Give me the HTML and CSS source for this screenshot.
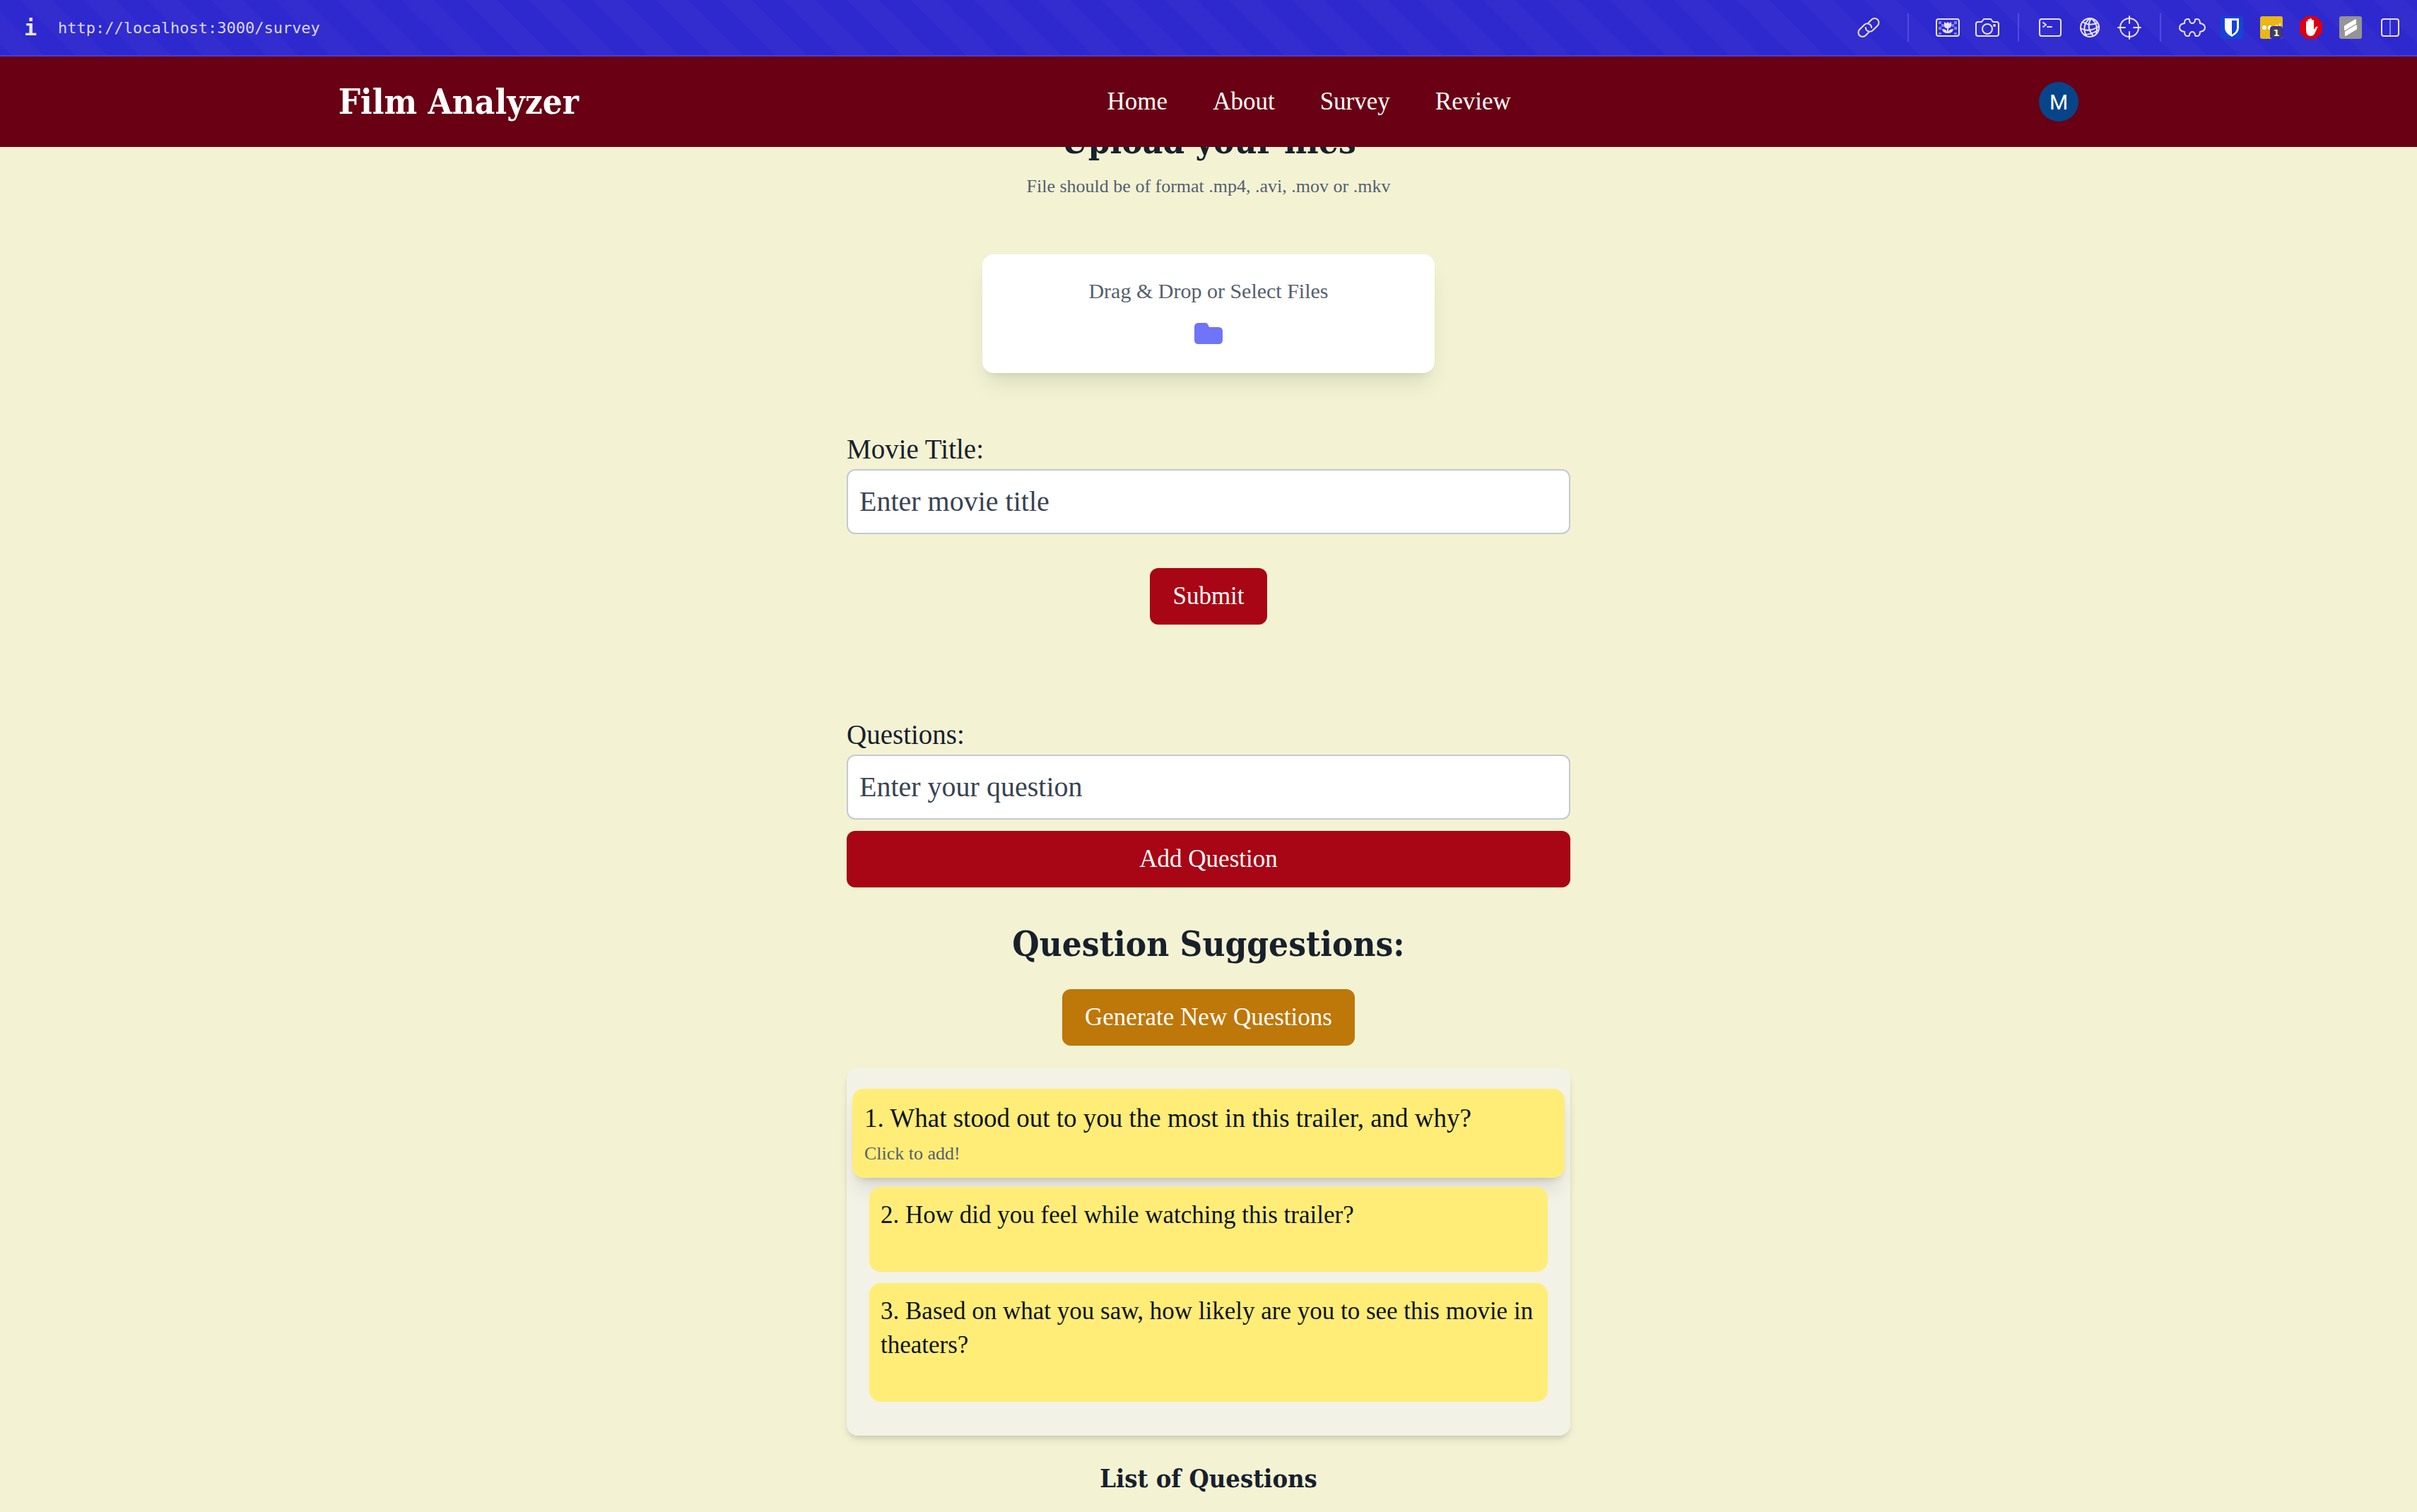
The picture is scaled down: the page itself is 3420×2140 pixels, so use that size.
FILE: index.html
```html
<!DOCTYPE html>
<html lang="en">
<head>
<meta charset="utf-8">
<title>Film Analyzer</title>
<link rel="stylesheet" href="styles.css">
</head>
<body>
<div class="toolbar">
  <span class="info">i</span>
  <span class="url">http://localhost:3000/survey</span>
  <div class="tools">
    <svg class="tool" viewBox="0 0 40 40"><g transform="rotate(-45 20 20)"><path d="M15 25H9a6 6 0 0 1 0-12h10a6 6 0 0 1 4 10"/><path d="M25 15h6a6 6 0 0 1 0 12H21a6 6 0 0 1-4-10"/></g></svg>
    <span class="sep sep-wide"></span>
    <svg class="tool" viewBox="0 0 40 40"><rect x="4" y="8" width="32" height="24" rx="3"/><g class="faint"><rect x="7" y="11" width="4" height="4"/><rect x="11" y="15" width="4" height="4"/><rect x="7" y="19" width="4" height="4"/><rect x="7" y="27" width="4" height="3"/><rect x="29" y="11" width="4" height="4"/><rect x="25" y="15" width="4" height="4"/><rect x="29" y="19" width="4" height="4"/><rect x="29" y="27" width="4" height="3"/></g><path class="solid" d="M15 12l3 2 2-2 2 2 3-2v5q-1 4-4 4v5q1-4 7-4-1 6-8 6t-8-6q6 0 7 4v-5q-4 0-4-4z"/></svg>
    <svg class="tool" viewBox="0 0 40 40"><path d="M7 12h5l3-4h10l3 4h5q3 0 3 3v14q0 3-3 3H7q-3 0-3-3V15q0-3 3-3z"/><circle cx="20" cy="22" r="7"/><circle class="solid" cx="30" cy="17" r="2"/></svg>
    <span class="sep"></span>
    <svg class="tool" viewBox="0 0 40 40"><rect x="5" y="8" width="30" height="24" rx="3"/><path d="M10 13l4 3-4 3M16 19h6"/></svg>
    <svg class="tool" viewBox="0 0 40 40"><circle cx="20" cy="20" r="13"/><path d="M20 7q-12 10-5 25M22 7q-8 12 3 25M22 7q11 9 7 22M10 12q10 7 21 1M7 21q12 7 26-3M12 30q10 0 19-6"/></svg>
    <svg class="tool" viewBox="0 0 40 40"><circle cx="20" cy="20" r="13"/><path d="M20 4v10M20 26v10M4 20h10M26 20h10"/></svg>
    <span class="sep"></span>
    <svg class="tool" viewBox="0 0 40 40"><path d="M9 14q0-6 4-6h2q1 0 1 2 1 4 4 4t4-4q0-2 1-2h2q4 0 4 6 7 1 7 6t-7 6q0 6-4 6h-2q-1 0-1-2-1-4-4-4t-4 4q0 2-1 2h-2q-4 0-4-6-7-1-7-6t7-6z"/></svg>
    <svg class="tool badge" viewBox="0 0 40 40"><rect x="4" y="4" width="32" height="32" rx="4" fill="#1443d6"/><path d="M10 7h20v13q0 8-10 13-10-5-10-13z" fill="#fff"/><path d="M20 10h7v11q0 5-7 9z" fill="#1443d6"/></svg>
    <svg class="tool badge" viewBox="0 0 40 40"><rect x="4" y="4" width="32" height="32" rx="3" fill="#eab714"/><circle cx="10" cy="20" r="3" fill="#fff"/><circle cx="18" cy="20" r="3" fill="#fff"/><path d="M26 16h3v3h-3zM31 14h2v5h-2z" fill="#f8e7b4"/><rect x="19" y="19" width="16" height="16" rx="3" fill="#444" stroke="#2e28cf"/><text class="count" x="27" y="32" text-anchor="middle">1</text></svg>
    <svg class="tool badge" viewBox="0 0 40 40"><path d="M13 4h14l9 9v14l-9 9H13l-9-9V13z" fill="#dc0010"/><path d="M13 24V12q1-2 2.500 0v7V9q1-2 2.500 0v9V8q1.500-2 3 0v10V10q1.500-2 3 0v13l3-4q2-1 2.500 0l-4 9q-2 4-6 4-6 0-6.500-8z" fill="#fff"/></svg>
    <svg class="tool badge" viewBox="0 0 40 40"><rect x="4" y="4" width="32" height="32" rx="3" fill="#949494"/><path d="M12 18l15-9v5l-15 9zM13 26l15-9v5l-15 9z" fill="#fff" stroke="#fff"/></svg>
    <svg class="tool" viewBox="0 0 40 40"><rect x="8" y="8" width="24" height="24" rx="3"/><path class="thin" d="M20 8v24"/></svg>
  </div>
</div>

<header class="site-header">
  <a class="brand" href="#">Film Analyzer</a>
  <nav class="links">
    <a href="#">Home</a>
    <a href="#">About</a>
    <a href="#">Survey</a>
    <a href="#">Review</a>
  </nav>
  <button class="avatar" type="button">M</button>
</header>

<main class="page">
  <h1 class="title">Upload your files</h1>
  <p class="formats">File should be of format .mp4, .avi, .mov or .mkv</p>

  <button class="dropzone" type="button">
    <span>Drag &amp; Drop or Select Files</span>
    <svg class="folder" viewBox="0 0 48 48"><path d="M4 15q0-6 6-6h10q2 0 3 2l2 4h13q6 0 6 6v12q0 6-6 6H10q-6 0-6-6z"/></svg>
  </button>

  <form class="movie-form">
    <label for="movie">Movie Title:</label>
    <input id="movie" type="text" placeholder="Enter movie title">
    <button class="btn" type="button">Submit</button>
  </form>

  <form class="question-form">
    <label for="question">Questions:</label>
    <input id="question" type="text" placeholder="Enter your question">
    <button class="btn btn-block" type="button">Add Question</button>
  </form>

  <h2 class="title suggestions-title">Question Suggestions:</h2>
  <button class="btn btn-amber" type="button">Generate New Questions</button>

  <section class="panel">
    <article class="card active">
      <p>1. What stood out to you the most in this trailer, and why?</p>
      <p class="hint">Click to add!</p>
    </article>
    <article class="card">
      <p>2. How did you feel while watching this trailer?</p>
    </article>
    <article class="card">
      <p>3. Based on what you saw, how likely are you to see this movie in theaters?</p>
    </article>
  </section>

  <h2 class="list-title">List of Questions</h2>
</main>
</body>
</html>
```
FILE: styles.css
```css
* {
  box-sizing: border-box;
}

body {
  margin: 0;
  background: #f3f3d4;
  color: #18202c;
  font-family: "Liberation Serif", serif;
  font-size: 35px;
}

p,
h1,
h2 {
  margin: 0;
}

button,
input {
  font: inherit;
}

button {
  border: 0;
  cursor: pointer;
}

a {
  color: inherit;
  text-decoration: none;
}

/* Browser toolbar */
.toolbar {
  display: flex;
  align-items: center;
  height: 80px;
  padding: 0 18px 0 34px;
  border-bottom: 2px solid #4640d4;
  background: linear-gradient(45deg, #332dd0 25%, #2e28cf 25% 50%, #332dd0 50% 75%, #2e28cf 75%) 29px 0 / 90px 90px;
  color: #d9d8fa;
  font-family: "DejaVu Sans Mono", monospace;
  font-size: 22px;
}

.info {
  width: 48px;
  color: #e8e6ff;
  font-size: 30px;
  font-weight: bold;
}

.tools {
  display: flex;
  align-items: center;
  gap: 16px;
  margin-left: auto;
}

.tool {
  width: 40px;
  height: 40px;
  fill: none;
  stroke: #e4e3fc;
  stroke-width: 2;
  stroke-linecap: round;
  stroke-linejoin: round;
}

.tool .solid {
  fill: #e4e3fc;
  stroke: none;
}

.tool .faint {
  fill: #8480e4;
  stroke: none;
}

.tool .thin {
  stroke-width: 1;
}

.badge {
  stroke: none;
}

.count {
  fill: #fff;
  font: bold 13px "DejaVu Sans", sans-serif;
}

.sep {
  width: 2px;
  height: 40px;
  margin: 0 8px 0 7px;
  background: #5049e4;
}

.sep-wide {
  margin: 0 19px;
}

/* Site header */
.site-header {
  position: relative;
  z-index: 1;
  display: flex;
  align-items: center;
  justify-content: space-between;
  height: 128px;
  padding: 0 14%;
  background: #690014;
  color: #fff;
}

.brand,
.title,
.list-title {
  font-family: "DejaVu Serif Condensed", "DejaVu Serif", serif;
  font-weight: bold;
}

.brand {
  font-size: 49px;
}

.links {
  display: flex;
  gap: 64px;
}

.avatar {
  width: 56px;
  height: 56px;
  padding: 0;
  border-radius: 50%;
  background: #07458a;
  color: #fff;
  font-family: Roboto, sans-serif;
  font-size: 30px;
}

/* Survey page */
.page {
  display: flex;
  flex-direction: column;
  align-items: center;
  max-width: 1024px;
  margin: -40px auto 0;
}

.title {
  font-size: 49px;
  line-height: 64px;
}

.formats {
  margin-top: 16px;
  color: #555f6e;
  font-size: 26px;
  line-height: 32px;
}

.dropzone {
  display: flex;
  flex-direction: column;
  align-items: center;
  gap: 16px;
  width: 640px;
  margin-top: 80px;
  padding: 32px;
  border-radius: 16px;
  background: #fff;
  box-shadow: 0 20px 30px -6px rgba(0, 0, 0, 0.1), 0 8px 12px -8px rgba(0, 0, 0, 0.1);
  color: #555f6e;
  font-size: 30px;
  line-height: 40px;
}

.folder {
  width: 48px;
  height: 48px;
  fill: #6f74f8;
}

.movie-form,
.question-form {
  display: flex;
  flex-direction: column;
  align-items: center;
  width: 100%;
  margin-top: 80px;
}

.question-form {
  margin-top: 128px;
}

label {
  align-self: flex-start;
  font-size: 39px;
  line-height: 56px;
}

input {
  width: 100%;
  height: 92px;
  padding: 0 16px 2px;
  border: 2px solid #c5c9d0;
  border-radius: 12px;
  background: #fff;
  font-size: 40px;
}

input::placeholder {
  color: #394352;
  opacity: 1;
}

.btn {
  height: 80px;
  margin-top: 48px;
  padding: 0 32px;
  border-radius: 12px;
  background: #a80614;
  color: #fff;
}

.btn-block {
  width: 100%;
  margin-top: 16px;
}

.btn-amber {
  margin-top: 32px;
  background: #be7709;
}

.suggestions-title {
  margin-top: 48px;
}

.panel {
  display: flex;
  flex-direction: column;
  gap: 16px;
  width: 100%;
  margin-top: 32px;
  padding: 32px 32px 48px;
  border-radius: 16px;
  background: #f2f2e6;
  box-shadow: 0 8px 12px -2px rgba(0, 0, 0, 0.1), 0 4px 8px -4px rgba(0, 0, 0, 0.15);
}

.card {
  padding: 16px 16px 56px;
  border-radius: 16px;
  background: #ffed78;
  color: #0d131c;
  line-height: 48px;
}

.active {
  margin: -3px -24px;
  padding: 17px;
  box-shadow: 0 20px 30px -6px rgba(0, 0, 0, 0.1), 0 8px 12px -8px rgba(0, 0, 0, 0.2);
  font-size: 37px;
  line-height: 50px;
}

.hint {
  margin-top: 8px;
  color: #555f6e;
  font-size: 26px;
  line-height: 34px;
}

.list-title {
  margin-top: 32px;
  font-size: 36px;
  line-height: 56px;
}
```
